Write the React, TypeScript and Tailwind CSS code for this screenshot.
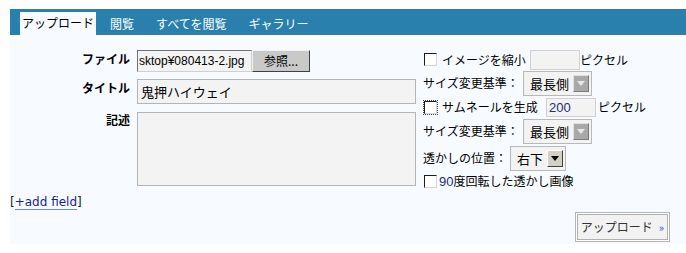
import React from "react";

const jp = "font-['Noto_Sans_CJK_JP','Noto_Sans',sans-serif]";

function Checkbox({ focused = false }: { focused?: boolean }) {
  return (
    <span className={focused ? "inline-flex p-[1px] outline outline-1 outline-dotted outline-[#444] -outline-offset-1" : "inline-flex p-[1px]"}>
      <span className="block w-[13px] h-[13px] bg-white border border-[#1c1c1c] border-r-[#d4d4d4] border-b-[#d4d4d4]" />
    </span>
  );
}

function Select({ value, width, enabled = false }: { value: string; width: number; enabled?: boolean }) {
  return (
    <div
      className="flex items-center h-[25px] bg-[#f3f3f3] border border-[#b8b8b8] pl-[6px] pr-[2px]"
      style={{ width }}
    >
      <span className="flex-1 text-[13px] leading-none text-black">{value}</span>
      {enabled ? (
        <span className="flex items-center justify-center w-[16px] h-[17px] bg-[#d4d0c8] border border-white border-r-[#404040] border-b-[#404040]">
          <svg width="8" height="5" viewBox="0 0 8 5">
            <path d="M0 0h8L4 5z" fill="#000" />
          </svg>
        </span>
      ) : (
        <span className="flex items-center justify-center w-[16px] h-[17px] bg-[#a9a9a9] border border-[#e0e0e0] border-r-[#7a7a7a] border-b-[#7a7a7a]">
          <svg width="8" height="5" viewBox="0 0 8 5">
            <path d="M0 0h8L4 5z" fill="#e8e8e8" />
          </svg>
        </span>
      )}
    </div>
  );
}

function clsxJoin(...c: string[]) {
  return c.join(" ");
}

export default function App() {
  const tabs = ["閲覧", "すべてを閲覧", "ギャラリー"];

  return (
    <div className={clsxJoin("w-[686px] h-[253px] bg-white pt-[9px] pl-[10px] overflow-hidden text-black", jp)}>
      {/* Tabs */}
      <div className="flex items-start h-[26px] bg-[#2980ad] pl-[10px] pt-[3px]">
        <div className="h-[28px] w-[76px] bg-[#f7fbff] flex items-start justify-center pt-[4px] text-[12px] leading-[14px]">
          アップロード
        </div>
        {tabs.map((t) => (
          <div key={t} className="ml-[14px] mr-[8px] pt-[5px] text-[12px] leading-[14px] text-white">
            {t}
          </div>
        ))}
      </div>

      {/* Panel */}
      <div className="mt-[5px] h-[204px] bg-[#f7fbff] pt-[9px]">
        <div className="flex items-start">
          {/* Left column */}
          <div className="w-[406px] mt-[1px]">
            <div className="flex h-[22px]">
              <div className="w-[120px] text-right font-bold text-[12px] leading-[16px] pt-[1px]">ファイル</div>
              <div className="ml-[7px] w-[115px] h-[22px] bg-[#f3f3f3] border border-[#707070] border-r-[#d0d0d0] border-b-[#d0d0d0] overflow-hidden whitespace-nowrap font-['Liberation_Sans',sans-serif] text-[12px] leading-[20px] pl-[1px]">
                sktop¥080413-2.jpg
              </div>
              <div className="w-[58px] h-[22px] bg-[#c9c9c9] border border-[#f0f0f0] border-r-[#404040] border-b-[#404040] flex items-center justify-center text-[12px] leading-none">
                参照...
              </div>
            </div>
            <div className="flex mt-[7px] h-[25px]">
              <div className="w-[120px] text-right font-bold text-[12px] leading-[16px] pt-[1px]">タイトル</div>
              <div className="ml-[7px] w-[279px] h-[25px] bg-[#f3f3f3] border border-[#b4b4b4] text-[13px] leading-[23px] pl-[3px]">
                鬼押ハイウェイ
              </div>
            </div>
            <div className="flex mt-[8px] h-[74px]">
              <div className="w-[120px] text-right font-bold text-[12px] leading-[16px]">記述</div>
              <div className="ml-[7px] w-[279px] h-[74px] bg-[#f3f3f3] border border-[#b4b4b4]" />
            </div>
          </div>

          {/* Right column */}
          <div className="ml-[7px] text-[12px] leading-[14px]">
            <div className="flex items-center h-[21px]">
              <Checkbox />
              <span className="ml-[4px] w-[88px] whitespace-nowrap">イメージを縮小</span>
              <div className="w-[50px] h-[20px] bg-[#f3f3f3] border border-[#d0d0d0]" />
              <span>ピクセル</span>
            </div>
            <div className="flex items-center h-[26px]">
              <span className="w-[100px]">サイズ変更基準：</span>
              <Select value="最長側" width={69} />
            </div>
            <div className="flex items-center h-[22px]">
              <Checkbox focused />
              <span className="ml-[4px] w-[104px]">サムネールを生成</span>
              <div className="w-[50px] h-[19px] bg-[#f3f3f3] border border-[#d0d0d0] font-['Liberation_Sans',sans-serif] text-[13px] leading-[17px] pl-[2px] text-[#1e2a78]">
                200
              </div>
              <span className="ml-[2px]">ピクセル</span>
            </div>
            <div className="flex items-center h-[26px]">
              <span className="w-[100px]">サイズ変更基準：</span>
              <Select value="最長側" width={69} />
            </div>
            <div className="flex items-center h-[28px]">
              <span className="w-[87px]">透かしの位置：</span>
              <Select value="右下" width={56} enabled />
            </div>
            <div className="flex items-center h-[18px]">
              <Checkbox />
              <span className="ml-[1px]">
                <span className="font-['Liberation_Sans',sans-serif] text-[13px] text-[#1e2a78]">90</span>度回転した透かし画像
              </span>
            </div>
          </div>
        </div>

        {/* add field */}
        <div className="mt-[4px] font-['DejaVu_Sans',sans-serif] text-[12px] leading-[17px] text-[#222]">
          [<span className="text-[#1a1a9c] border-b border-[#5b8fd6]">+add field</span>]
        </div>

        {/* Submit */}
        <div className="flex justify-end pr-[16px] mt-[1px]">
          <div className="w-[95px] h-[30px] border border-[#b4b4b4] p-[1px] bg-white">
            <div className="h-full bg-[#f2f2f2] border border-[#b0b0b0] flex items-center justify-center whitespace-nowrap text-[12px] leading-none text-[#333]">
              アップロード<span className="ml-[6px] text-[11px] text-[#3050c8]">»</span>
            </div>
          </div>
        </div>
      </div>
    </div>
  );
}
